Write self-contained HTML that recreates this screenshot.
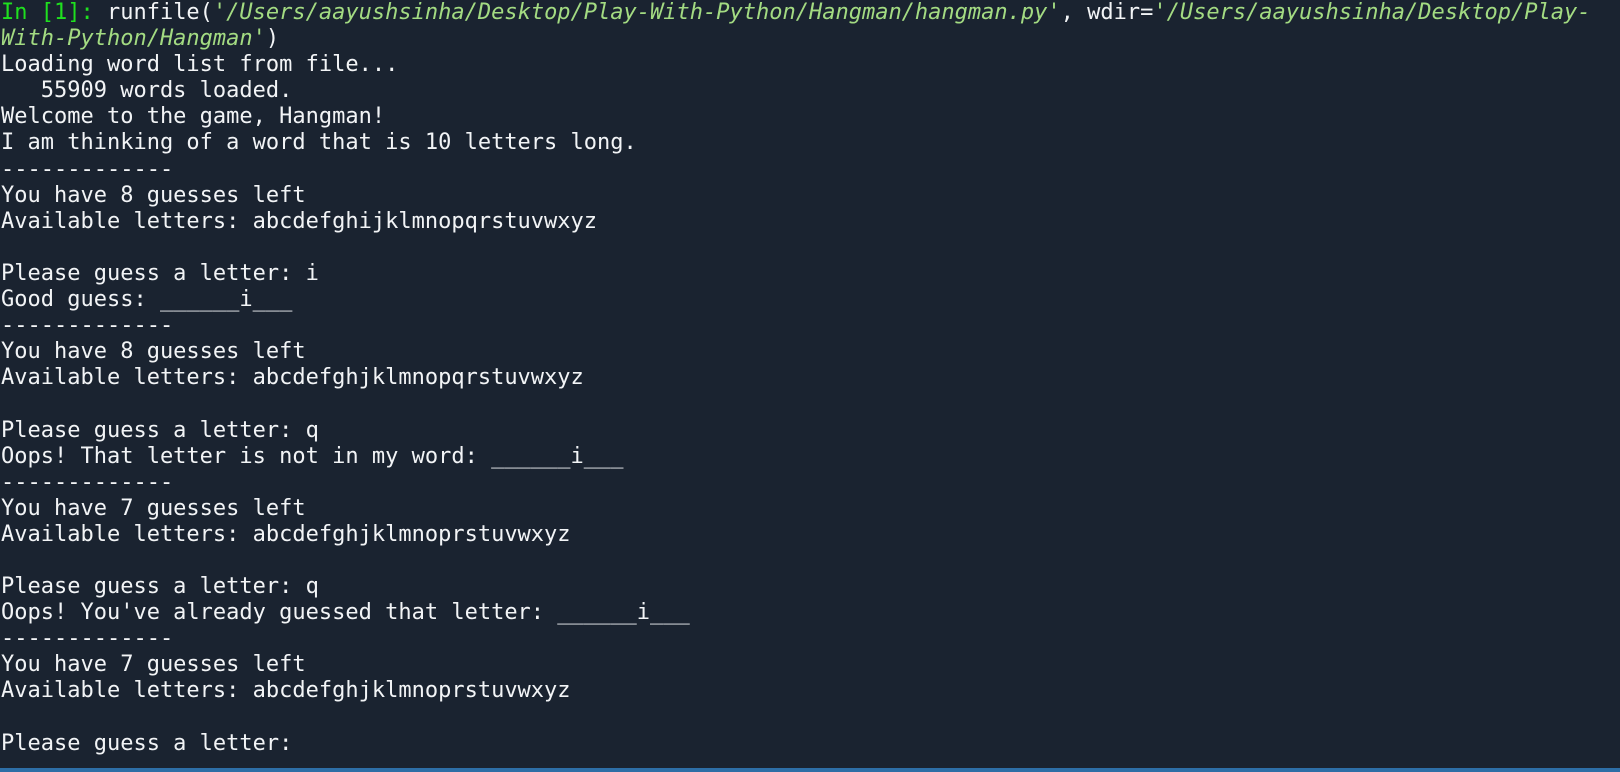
<!DOCTYPE html>
<html><head><meta charset="utf-8"><style>
html,body{margin:0;padding:0;background:#1a2330;width:1620px;height:772px;overflow:hidden}
pre{margin:0;padding:0 0 0 1px;font-family:"DejaVu Sans Mono","Liberation Mono",monospace;font-size:22px;line-height:26.1px;color:#f2f4f6;white-space:pre}
.g{color:#1fe01f}
.s{color:#a3db82;font-style:italic}
.bar{position:absolute;left:0;top:768px;width:1620px;height:4px;background:#2d6ea6}
</style></head><body>
<pre><span class="g">In [1]:</span> runfile(<span class="s">'/Users/aayushsinha/Desktop/Play-With-Python/Hangman/hangman.py'</span>, wdir=<span class="s">'/Users/aayushsinha/Desktop/Play-</span>
<span class="s">With-Python/Hangman'</span>)
Loading word list from file...
   55909 words loaded.
Welcome to the game, Hangman!
I am thinking of a word that is 10 letters long.
-------------
You have 8 guesses left
Available letters: abcdefghijklmnopqrstuvwxyz

Please guess a letter: i
Good guess: ______i___
-------------
You have 8 guesses left
Available letters: abcdefghjklmnopqrstuvwxyz

Please guess a letter: q
Oops! That letter is not in my word: ______i___
-------------
You have 7 guesses left
Available letters: abcdefghjklmnoprstuvwxyz

Please guess a letter: q
Oops! You've already guessed that letter: ______i___
-------------
You have 7 guesses left
Available letters: abcdefghjklmnoprstuvwxyz

Please guess a letter: </pre>
<div class="bar"></div>
</body></html>
